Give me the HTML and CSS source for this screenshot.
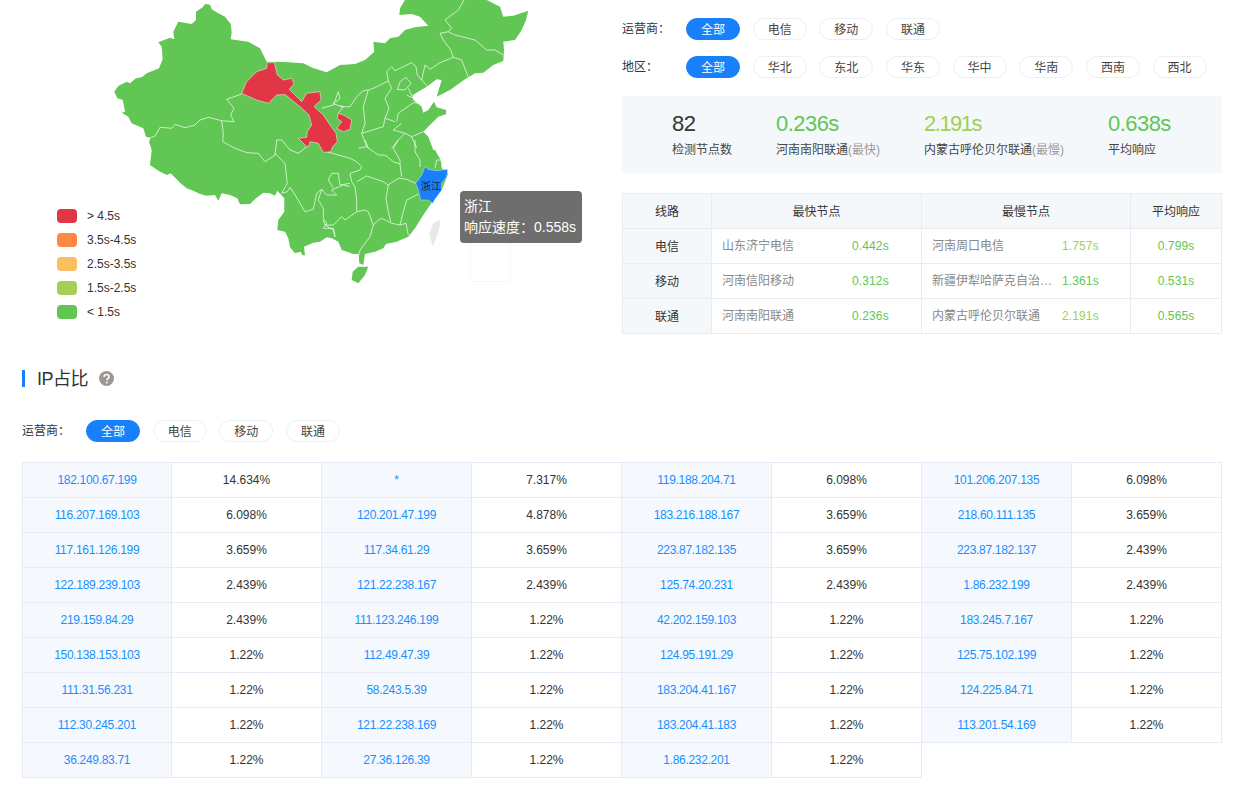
FILE: index.html
```html
<!DOCTYPE html>
<html lang="zh">
<head>
<meta charset="utf-8">
<title>IP占比</title>
<link rel="stylesheet" href="styles.css">
</head>
<body>
<div class="page">
  <section class="top">
    <div class="map-panel">
      <svg class="map" viewBox="100 0 500 340" xmlns="http://www.w3.org/2000/svg">
        <path class="land" d="M205 4L202.7 7.3L196 11.7L196 20L191.7 24L178.3 21.7L173.3 31.7L174.3 39.3L170 37.7L158.3 42.3L161.7 46.7L162.7 59.3L159 68.3L146.7 73.3L141.7 77.3L136 78.3L130 83.3L126.7 81.7L118.3 86L114.3 91.7L117.3 98.3L122.7 100L125 111.7L121.7 112.7L128.3 116.7L131.7 123.3L143.3 128.3L146 136.7L150.7 137.7L149 141.7L151.7 150L150 165L158.3 170.7L166.7 175L170.7 173.3L180 182.7L186.7 188.3L193.3 190.7L200 194L206.7 195.7L215 195L218.3 200.7L221.7 193.3L230 195L237.3 198.3L240 204.3L250 204L256 198.3L263.3 192.7L270 193.3L275 195.7L277.3 190.7L284.3 198.3L284.3 211.7L278.3 220L277.3 230L285 231.7L288.3 238.3L290 247.3L295 253.3L300.7 251.7L302.3 255.3L305 255.3L304 246.7L313.3 242.7L320 241.7L326.7 237.3L331.7 238.3L338.3 241.7L341.7 250L353.3 254L358.7 254L359.3 263.3L363.3 265L365 254L375 251.7L383.3 248.3L386 244L396.7 241.7L408.3 236.7L415 228.3L423.3 215L431.7 202.7L441.7 190L448.3 173.3L441.7 168.3L440.7 160L435 150L433.3 150L428.3 136.7L423.3 131.7L431.7 123.3L438.3 116.7L446 114.3L446 110L436.7 107.3L434 101.7L428.3 110L423.3 112.7L421.7 106.7L413.3 100L412.7 95L426.7 86.7L436.7 79.3L441.7 80L436.7 96.7L450 90L465 79.3L475 73.3L483.3 72.7L493.3 65L503.3 61L504 50L503.3 41.7L515 40L521.7 30L526 20L528.3 10.7L513.3 15.7L503.3 16.7L500 6.7L486.7 0L405 0L400 8.3L399.3 15L411.7 14L420 16.7L428.3 25.7L415 27.3L405 30L398.3 36.7L390 38.3L385 43.3L373.3 41.7L374.3 51.7L365 60L355 64L340 65L326.7 72.3L313 68L303.3 63.3L285 62L266.7 61.7L260 48.3L248.3 41.7L230.7 39.3L231.7 32.3L230.7 24L225 16.7L218.3 13.3L211.7 9.3L210 4.7Z"/>
        <path class="land" d="M358.3 266.7L368.3 266.7L365 275L358.3 283.3L351.7 280L352.7 271.7Z"/>
        <path class="taiwan" d="M439.3 220L433.3 223.3L429.3 233.3L432.7 246.7L436.7 236.7L440.7 223.3Z"/>
        <path class="borders" d="M241.7 94L226.7 99.3L234 108.3L230.7 115L234 121.7L221.7 120.7L208.3 117.3L200 120L195 125L185 127.7L175 124.3L171.7 128.3L160 127.3L155 136L150.7 137.7
          M221.7 120.7L223.3 133.3L222.7 141.7L235 148.3L246.7 152.7L258.3 153.3L265 161.7L275 155L276.7 140L281.7 140L290 150L298.3 153.3L306.7 146.7
          M275 153.3L285 163.3L287.3 183.3L281.7 193.3M281.7 193.3L287.3 191.7L290 187.3L295 195L305 211.7L313.3 209.3L316.7 193.3L321.7 189.3L326.7 195L336.7 195L331.7 190L343.3 185L350 186.7
          M321.7 189.3L318.3 200L323.3 208.3L323.3 218.3L326.7 223.3L323.3 228.3L333.3 228.3L335 236.7
          M326.7 151.7L350 158.3L356.7 161.7L361.7 166.7L360 170L350 173.3L351.7 181.7L355 186.7L356.7 200L356.7 211.7
          M328.3 180L331.7 173.3L338.3 173.3L340 185L350 183.3M328.3 180L333.3 188.3
          M323.3 220L325 225L333.3 225L341.7 216.7L345 220L356.7 211.7L365 210L368.3 211.7L373.3 225L378.3 220L381.7 218.3L391.7 223.3L400 225L406 223.3L408.3 235
          M373.3 225L370 236.7L360 250L358.7 255M325 225L333.3 230L335 236.7
          M356.7 181.7L366.7 176L383.3 181.7L388.3 185L386 198.3L388.3 211.7L390.7 221.7
          M358.3 148.3L366.7 146.7L378.3 155L385 155L393.3 161.7L400 164L401.7 176.7
          M388.3 185L398.3 178.3L406.7 179.3L415.7 183.3
          M418.3 194L406.7 200L403.3 211.7L400 225
          M393.3 148.3L398.3 140M393.3 148.3L400 160L400 164
          M415 140L415 151.7L420 160L420 167M435 168.3L436.7 160L441.7 160
          M365 140L368.3 148.3
          M368.3 90L363.3 106.7L365 123.3L361.7 133.3L366.7 146.7
          M340 106.7L350 106.7L356.7 96.7L363.3 90.7L368.3 90L373.3 88.3L388.3 81L391.7 88.3L385 98.3L389 108.3L385 118.3L395 121.7
          M361.7 133.3L383.3 126.7L385 118.3
          M388.3 81L386.7 71.7L391.7 66.7L395 70.7L411.7 62.7L416 66.7L417.3 75L421.7 80L428.3 87.3
          M421.7 80L425 65L430 69.3L440 62.7L453.3 57.3L461.7 60L468.3 77.3
          M453.3 57.3L450.7 50L443.3 40L440 33.3L448.3 31.7L455 35L475 40L486.7 50L495 50L503.3 55
          M448.3 31.7L451.7 28.3L445 20L458.3 10L464 0
          M397.3 89.3L400 81.7L406 77.3L411 83.3L405 90Z
          M408.3 88.3L413.3 98.3L406.7 95
          M396.7 121.7L398.3 113.3L413.3 102.7L421.7 103.3
          M401.7 123.3L393.3 130L405 133.3L411.7 136.7L423.3 131.7
          M398.3 140L405 133.3M391.7 148.3L398.3 140M411.7 136.7L416.7 148
          M321.7 108.3L333.3 105L338.3 91.7L340 98.3L333.3 104L343.3 106.7L338.3 113.3"/>
        <path class="slow" d="M267.3 62.7L274.3 62.7L277.3 75L283.3 80L291.7 78.3L294 84L289.3 89.3L301.7 101.7L306.7 93.3L320 91.7L321 100L314 106.7L323.3 115L330 125L336 133.3L337.3 141.7L332.7 146.7L330.7 151.7L323.3 152.3L318.3 143.3L310 141.7L308.3 147.3L305 145L298.3 138.3L306.7 137.3L307.3 131.7L311.7 125L309 115L301 107.5L293 101L285 94.5L276.7 95L268.3 103.3L256.7 100L241.7 93.3L246.7 81.7L256.7 71.7L266.7 68.3Z"/>
        <path class="slow" d="M338.3 113.3L343.3 115L351.7 120L350 129.3L343.3 131.7L336.7 128.3L341.7 121.7L337.3 118.3Z"/>
        <path class="active" d="M425 166.7L428.3 169.3L436 170.7L447.7 169.3L446.7 176.7L441.7 183.3L441.7 190L435 199.3L432.7 203.3L428.3 200L420.7 200L418.3 190L415.7 183.3L421.7 175Z"/>
        <text class="map-label" x="431" y="190" text-anchor="middle">浙江</text>
      </svg>
      <div class="dash-box"></div>
      <div class="tooltip">浙江<br>响应速度：0.558s</div>
      <ul class="legend">
        <li class="legend-item"><span class="swatch sw-red"></span><span>&gt; 4.5s</span></li>
        <li class="legend-item"><span class="swatch sw-orange"></span><span>3.5s-4.5s</span></li>
        <li class="legend-item"><span class="swatch sw-yellow"></span><span>2.5s-3.5s</span></li>
        <li class="legend-item"><span class="swatch sw-lime"></span><span>1.5s-2.5s</span></li>
        <li class="legend-item"><span class="swatch sw-green"></span><span>&lt; 1.5s</span></li>
      </ul>
    </div>
    <div class="side">
      <div class="filter">
        <span class="filter-label">运营商：</span>
        <span class="pill on">全部</span><span class="pill">电信</span><span class="pill">移动</span><span class="pill">联通</span>
      </div>
      <div class="filter">
        <span class="filter-label">地区：</span>
        <span class="pill on">全部</span><span class="pill">华北</span><span class="pill">东北</span><span class="pill">华东</span><span class="pill">华中</span><span class="pill">华南</span><span class="pill">西南</span><span class="pill">西北</span>
      </div>
      <div class="stats">
        <div class="stat"><div class="stat-num">82</div><div class="stat-cap">检测节点数</div></div>
        <div class="stat"><div class="stat-num green">0.236s</div><div class="stat-cap">河南南阳联通<span class="muted">(最快)</span></div></div>
        <div class="stat"><div class="stat-num lime tight">2.191s</div><div class="stat-cap">内蒙古呼伦贝尔联通<span class="muted">(最慢)</span></div></div>
        <div class="stat"><div class="stat-num green">0.638s</div><div class="stat-cap">平均响应</div></div>
      </div>
      <table class="lines">
        <colgroup><col class="c1"><col class="c2"><col class="c3"><col class="c4"></colgroup>
        <thead><tr><th>线路</th><th>最快节点</th><th>最慢节点</th><th>平均响应</th></tr></thead>
        <tbody>
          <tr><th>电信</th>
            <td><div class="node"><span class="node-name">山东济宁电信</span><span class="num green">0.442s</span></div></td>
            <td><div class="node"><span class="node-name">河南周口电信</span><span class="num lime">1.757s</span></div></td>
            <td class="avg num green">0.799s</td></tr>
          <tr><th>移动</th>
            <td><div class="node"><span class="node-name">河南信阳移动</span><span class="num green">0.312s</span></div></td>
            <td><div class="node"><span class="node-name">新疆伊犁哈萨克自治…</span><span class="num green">1.361s</span></div></td>
            <td class="avg num green">0.531s</td></tr>
          <tr><th>联通</th>
            <td><div class="node"><span class="node-name">河南南阳联通</span><span class="num green">0.236s</span></div></td>
            <td><div class="node"><span class="node-name">内蒙古呼伦贝尔联通</span><span class="num lime">2.191s</span></div></td>
            <td class="avg num green">0.565s</td></tr>
        </tbody>
      </table>
    </div>
  </section>

  <h2 class="section-title">IP占比<svg class="help" viewBox="0 0 16 16" xmlns="http://www.w3.org/2000/svg"><circle cx="8" cy="8" r="8" fill="#9c9792"/><path d="M5.4 6.3C5.4 4.8 6.6 3.8 8 3.8s2.7.9 2.7 2.3c0 1-.6 1.6-1.3 2.1-.7.5-1 .8-1 1.6" fill="none" stroke="#fff" stroke-width="1.7"/><circle cx="8.3" cy="12.2" r="1.1" fill="#fff"/></svg></h2>
  <div class="filter filter-ip">
    <span class="filter-label">运营商：</span>
    <span class="pill on">全部</span><span class="pill">电信</span><span class="pill">移动</span><span class="pill">联通</span>
  </div>
  <div class="ip-grid">
    <a class="ip">182.100.67.199</a><span class="pct">14.634%</span><a class="ip">*</a><span class="pct">7.317%</span><a class="ip">119.188.204.71</a><span class="pct">6.098%</span><a class="ip">101.206.207.135</a><span class="pct">6.098%</span>
    <a class="ip">116.207.169.103</a><span class="pct">6.098%</span><a class="ip">120.201.47.199</a><span class="pct">4.878%</span><a class="ip">183.216.188.167</a><span class="pct">3.659%</span><a class="ip">218.60.111.135</a><span class="pct">3.659%</span>
    <a class="ip">117.161.126.199</a><span class="pct">3.659%</span><a class="ip">117.34.61.29</a><span class="pct">3.659%</span><a class="ip">223.87.182.135</a><span class="pct">3.659%</span><a class="ip">223.87.182.137</a><span class="pct">2.439%</span>
    <a class="ip">122.189.239.103</a><span class="pct">2.439%</span><a class="ip">121.22.238.167</a><span class="pct">2.439%</span><a class="ip">125.74.20.231</a><span class="pct">2.439%</span><a class="ip">1.86.232.199</a><span class="pct">2.439%</span>
    <a class="ip">219.159.84.29</a><span class="pct">2.439%</span><a class="ip">111.123.246.199</a><span class="pct">1.22%</span><a class="ip">42.202.159.103</a><span class="pct">1.22%</span><a class="ip">183.245.7.167</a><span class="pct">1.22%</span>
    <a class="ip">150.138.153.103</a><span class="pct">1.22%</span><a class="ip">112.49.47.39</a><span class="pct">1.22%</span><a class="ip">124.95.191.29</a><span class="pct">1.22%</span><a class="ip">125.75.102.199</a><span class="pct">1.22%</span>
    <a class="ip">111.31.56.231</a><span class="pct">1.22%</span><a class="ip">58.243.5.39</a><span class="pct">1.22%</span><a class="ip">183.204.41.167</a><span class="pct">1.22%</span><a class="ip">124.225.84.71</a><span class="pct">1.22%</span>
    <a class="ip">112.30.245.201</a><span class="pct">1.22%</span><a class="ip">121.22.238.169</a><span class="pct">1.22%</span><a class="ip">183.204.41.183</a><span class="pct">1.22%</span><a class="ip">113.201.54.169</a><span class="pct">1.22%</span>
    <a class="ip">36.249.83.71</a><span class="pct">1.22%</span><a class="ip">27.36.126.39</a><span class="pct">1.22%</span><a class="ip">1.86.232.201</a><span class="pct">1.22%</span>
  </div>
</div>
</body>
</html>
```

FILE: styles.css
```css
* { box-sizing: border-box; }
html, body { margin: 0; padding: 0; background: #fff; overflow: hidden; }
body {
  font-family: "Liberation Sans", "Noto Sans CJK SC", sans-serif;
  font-size: 12px;
  color: #333;
}
.page { width: 1248px; height: 795px; padding: 0 26px 0 22px; overflow: hidden; }
.top { display: flex; height: 334px; }
.map-panel { position: relative; width: 600px; height: 334px; flex: none; }
.map { position: absolute; left: 78px; top: 0; width: 500px; height: 340px; }
.land { fill: #62c654; }
.taiwan { fill: #e8e8e8; }
.borders { fill: none; stroke: #fff; stroke-width: .8; stroke-opacity: .85; stroke-linejoin: round; }
.slow { fill: #e03646; stroke: #fff; stroke-width: .8; stroke-opacity: .6; }
.active { fill: #1a7ffb; stroke: #fff; stroke-width: .6; stroke-opacity: .6; }
.map-label { font-size: 10px; fill: #222; font-family: "Noto Sans CJK SC", sans-serif; }
.dash-box { position: absolute; left: 448px; top: 240px; width: 41px; height: 42px; border: 1px solid #f7f7f7; }
.tooltip {
  position: absolute; left: 438px; top: 191px; width: 122px; height: 52px;
  padding: 5px 4px; border-radius: 4px;
  background: #6e6e6e; color: #fff; font-size: 14px; line-height: 21px; white-space: nowrap;
}
.legend { position: absolute; left: 35px; top: 204px; margin: 0; padding: 0; list-style: none; }
.legend-item { display: flex; align-items: center; gap: 10px; height: 24px; font-size: 12px; }
.swatch { width: 20px; height: 14px; border-radius: 4px; flex: none; }
.sw-red { background: #e03646; }
.sw-orange { background: #ff8843; }
.sw-yellow { background: #f9bf60; }
.sw-lime { background: #a5d057; }
.sw-green { background: #62c654; }
.num { letter-spacing: .01em; }

.side { width: 600px; flex: none; padding-top: 18px; }
.filter { display: flex; align-items: center; height: 22px; margin-bottom: 16px; gap: 12.67px; }
.filter-label { width: 51.33px; flex: none; color: #333; line-height: 22px; }
.pill {
  width: 54px; height: 22px; flex: none; border: 1px solid #edeff2; border-radius: 11px; padding-bottom: 2px;
  display: flex; align-items: center; justify-content: center; color: #444; background: #fff;
}
.pill.on { background: #1880fb; border-color: #1880fb; color: #fff; }
.stats {
  display: flex; gap: 44px; height: 77px; margin-top: 18px; padding: 15px 0 0 50px;
  background: #f5f8fb;
}
.stat-num { font-size: 22px; line-height: 26px; color: #333; letter-spacing: -.025em; }
.stat-num.tight { letter-spacing: -1.5px; }
.stat-cap { margin-top: 4px; line-height: 18px; color: #444; white-space: nowrap; }
.muted { color: #999; }
.stat-num.green, .green { color: #62c654; }
.stat-num.lime, .lime { color: #a0cf55; }
.lines {
  width: 600px; margin-top: 20px; border-collapse: separate; border-spacing: 0; table-layout: fixed;
  border-top: 1px solid #e9edf1; border-left: 1px solid #e9edf1;
}
.c1 { width: 89px; } .c2 { width: 210px; } .c3 { width: 209px; } .c4 { width: 91px; }
.lines th, .lines td {
  height: 35px; padding: 0; border-right: 1px solid #e9edf1; border-bottom: 1px solid #e9edf1;
  font-weight: 400; text-align: center;
}
.lines th { background: #f5f8fb; color: #333; padding-bottom: 2px; }
.lines td { padding: 0 10px; }
.lines td.avg { padding: 0; }
.node { display: flex; align-items: center; text-align: left; line-height: 18px; }
.node-name { width: 130px; flex: none; color: #888; white-space: nowrap; }

.section-title {
  display: flex; align-items: center; margin: 36px 0 0; height: 17px;
  padding: 0 0 3px 12px; border-left: 3px solid #1880fb;
  font-size: 18px; font-weight: 400; color: #333; letter-spacing: -.5px;
}
.help { width: 15px; height: 15px; margin: 2px 0 0 11px; }
.filter-ip { margin: 33px 0 20px; }
.ip-grid {
  display: grid; grid-template-columns: repeat(8, 150px); grid-auto-rows: 35px; width: 1200px;
  border-top: 1px solid #e8ebf7;
}
.ip, .pct {
  display: flex; align-items: center; justify-content: center;
  border-right: 1px solid #e8ebf7; border-bottom: 1px solid #e8ebf7;
}
.ip { background: #f5f8fc; color: #1890ff; letter-spacing: -.025em; }
.ip:nth-child(8n+1) { border-left: 1px solid #e8ebf7; }
.pct { color: #333; background: #fff; }
```
